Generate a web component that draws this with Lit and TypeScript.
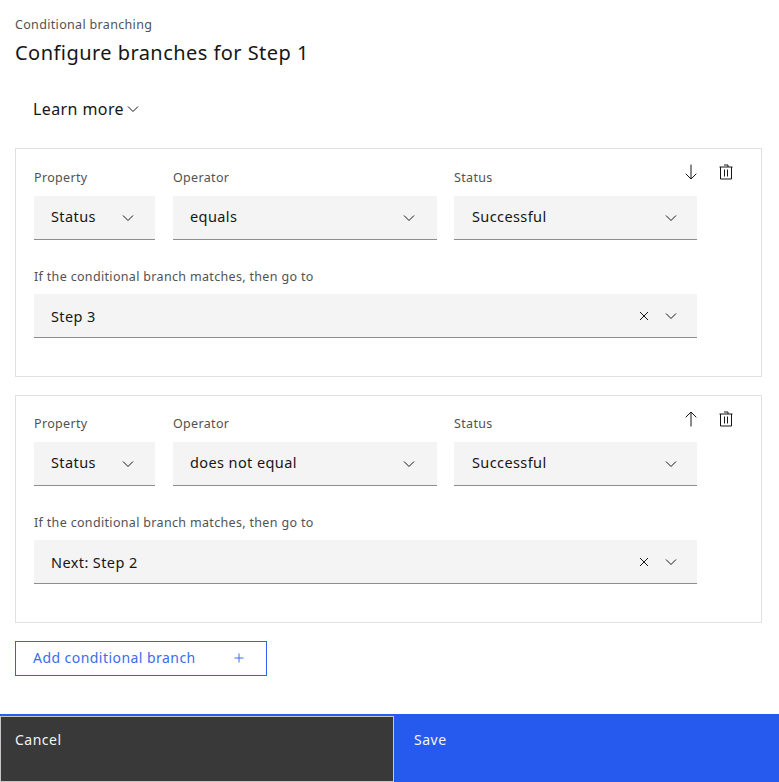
import { LitElement, html, css, svg } from "lit";
import { customElement } from "lit/decorators.js";

const chevron = html`<svg class="ico" width="16" height="16" viewBox="0 0 16 16" fill="none" stroke="currentColor" stroke-width="1"><path d="M3 5.5l5 5 5-5"/></svg>`;
const cross = html`<svg class="ico" width="16" height="16" viewBox="0 0 16 16" fill="none" stroke="currentColor" stroke-width="1"><path d="M4 4l8 8M12 4l-8 8"/></svg>`;
const down = html`<svg width="16" height="16" viewBox="0 0 16 16" fill="none" stroke="currentColor" stroke-width="1"><path d="M8 .5v14.5M2.7 9.7L8 15l5.3-5.3"/></svg>`;
const up = html`<svg width="16" height="16" viewBox="0 0 16 16" fill="none" stroke="currentColor" stroke-width="1"><path d="M8 15.5V1M2.7 6.3L8 1l5.3 5.3"/></svg>`;
const trash = html`<svg width="16" height="16" viewBox="0 0 16 16" fill="none" stroke="currentColor" stroke-width="1"><path d="M1.5 3h13M2.5 3v12h11V3M6 1h4v2M6.5 5.5v7M9.5 5.5v7"/></svg>`;
const plus = svg`<path d="M8 3.5v9M3.5 8h9"/>`;

interface Branch {
  op: string;
  target: string;
  icon: unknown;
}

const branches: Branch[] = [
  { op: "equals", target: "Step 3", icon: down },
  { op: "does not equal", target: "Next: Step 2", icon: up },
];

@customElement("app-root")
export class AppRoot extends LitElement {
  static styles = css`
    :host {
      display: flex;
      flex-direction: column;
      height: 782px;
      width: 779px;
      background: #fff;
      font-family: "Noto Sans", "Liberation Sans", sans-serif;
      color: #161616;
      overflow: hidden;
    }
    .head { padding: 16px 15px 0; flex: none; }
    .eyebrow { font-size: 12.5px; line-height: 18px; color: #525252; letter-spacing: .33px; }
    .title { font-size: 20px; line-height: 28px; margin-top: 5px; font-weight: 400; letter-spacing: .45px; }
    .learn {
      display: flex; align-items: center; gap: 1px;
      margin: 30px 0 0 18px; height: 24px; font-size: 16px; line-height: 24px; letter-spacing: .4px;
    }
    .content { padding: 27px 17px 0 15px; flex: 1; }
    .card {
      position: relative; box-sizing: border-box; height: 229px;
      border: 1px solid #e0e0e0; padding: 20px 0 0 18px; margin-bottom: 18px;
    }
    .card + .card { height: 228px; padding-top: 19px; }
    .row { display: grid; grid-template-columns: 121px 264px 243px; column-gap: 18px; }
    .row > :nth-child(3) { margin: 0 1px 0 -1px; }
    .row .field { padding-bottom: 3px; }
    .row .ico { margin-top: 3px; }
    .row > :nth-child(1) .field { padding-right: 19px; }
    .row > :nth-child(2) .field { padding-right: 20px; }
    .row > :nth-child(3) .field { padding-left: 18px; }
    .wide { width: 663px; margin-top: 28px; }
    .wide .ico { margin-top: 1px; }
    label { display: block; font-size: 12.5px; line-height: 18px; height: 18px; color: #525252; margin-bottom: 9px; letter-spacing: .33px; }
    .wide label { margin-bottom: 8px; }
    .field {
      display: flex; align-items: center; box-sizing: border-box; height: 44px;
      padding: 0 18px 0 17px; background: #f4f4f4; border-bottom: 1px solid #8d8d8d;
      font-size: 14.5px; color: #161616; letter-spacing: .4px;
    }
    .value { flex: 1; }
    .clear { margin-right: 11px; }
    .actions { position: absolute; top: 15px; right: 27px; display: flex; gap: 19px; }
    .actions svg { display: block; }
    .add {
      box-sizing: border-box; width: 252px; height: 35px;
      display: flex; align-items: center; justify-content: space-between;
      padding: 0 19px 2px 17px; border: 1px solid #2f62ee; color: #3b6cf0; font-size: 14px; letter-spacing: .45px;
    }
    .footer { display: flex; height: 68px; flex: none; font-size: 14px; letter-spacing: .5px; }
    .cancel {
      width: 394px; box-sizing: border-box; background: #393939; color: #f4f4f4;
      border-top: 2px solid #2b5cf0; box-shadow: inset 0 0 0 1px #c6c6c6;
      padding: 14px 15px;
    }
    .save { flex: 1; background: #2659ee; color: #f4f4f4; padding: 16px 20px; }
    .ico { display: block; flex: none; }
  `;

  private card(b: Branch) {
    return html`
      <div class="card">
        <div class="actions">${b.icon}${trash}</div>
        <div class="row">
          <div><label>Property</label><div class="field"><span class="value">Status</span>${chevron}</div></div>
          <div><label>Operator</label><div class="field"><span class="value">${b.op}</span>${chevron}</div></div>
          <div><label>Status</label><div class="field"><span class="value">Successful</span>${chevron}</div></div>
        </div>
        <div class="wide">
          <label>If the conditional branch matches, then go to</label>
          <div class="field"><span class="value">${b.target}</span><span class="clear">${cross}</span>${chevron}</div>
        </div>
      </div>
    `;
  }

  render() {
    return html`
      <div class="head">
        <div class="eyebrow">Conditional branching</div>
        <div class="title">Configure branches for Step 1</div>
        <div class="learn">Learn more ${chevron}</div>
      </div>
      <div class="content">
        ${branches.map((b) => this.card(b))}
        <div class="add">Add conditional branch
          <svg width="16" height="16" viewBox="0 0 16 16" fill="none" stroke="currentColor" stroke-width="1">${plus}</svg>
        </div>
      </div>
      <div class="footer">
        <div class="cancel">Cancel</div>
        <div class="save">Save</div>
      </div>
    `;
  }
}
